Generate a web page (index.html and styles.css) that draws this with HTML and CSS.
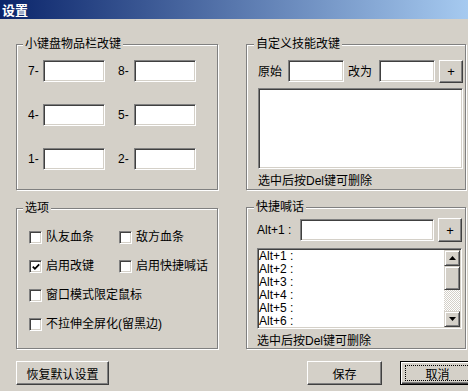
FILE: index.html
```html
<!DOCTYPE html>
<html lang="zh-CN">
<head>
<meta charset="utf-8">
<title>设置</title>
<link rel="stylesheet" href="styles.css">
</head>
<body>
<div class="window">
  <div class="titlebar"><span class="title">设置</span></div>
  <div class="client">
    <div class="columns">
      <div class="col col-left">
        <div class="group g-keypad">
          <span class="legend">小键盘物品栏改键</span>
          <div class="keypad">
            <span class="klabel">7-</span><span class="edit"></span>
            <span class="klabel k2">8-</span><span class="edit"></span>
            <span class="klabel">4-</span><span class="edit"></span>
            <span class="klabel k2">5-</span><span class="edit"></span>
            <span class="klabel">1-</span><span class="edit"></span>
            <span class="klabel k2">2-</span><span class="edit"></span>
          </div>
        </div>
        <div class="group g-options">
          <span class="legend">选项</span>
          <div class="options">
            <div class="check"><span class="box"></span><span>队友血条</span></div>
            <div class="check"><span class="box"></span><span>敌方血条</span></div>
            <div class="check"><span class="box"><svg class="tick" width="8" height="8" viewBox="0 0 8 8"><polyline points="0.8,3.6 2.9,5.8 7.2,1.4" fill="none" stroke="#000" stroke-width="1.8"/></svg></span><span>启用改键</span></div>
            <div class="check"><span class="box"></span><span>启用快捷喊话</span></div>
            <div class="check wide"><span class="box"></span><span>窗口模式限定鼠标</span></div>
            <div class="check wide"><span class="box"></span><span>不拉伸全屏化(留黑边)</span></div>
          </div>
        </div>
      </div>
      <div class="col col-right">
        <div class="group g-custom">
          <span class="legend">自定义技能改键</span>
          <div class="inner">
            <div class="row">
              <span class="lbl-orig">原始</span>
              <span class="edit edit-small"></span>
              <span class="lbl-to">改为</span>
              <span class="edit edit-small"></span>
              <span class="btn btn-plus">+</span>
            </div>
            <div class="listbox list-custom"></div>
            <div class="note">选中后按Del键可删除</div>
          </div>
        </div>
        <div class="group g-chat">
          <span class="legend">快捷喊话</span>
          <div class="inner">
            <div class="row">
              <span class="lbl-alt">Alt+1 :</span>
              <span class="edit edit-wide"></span>
              <span class="btn btn-plus btn-plus2">+</span>
            </div>
            <div class="listbox list-chat">
              <div class="items">
                <div class="item">Alt+1 :</div>
                <div class="item">Alt+2 :</div>
                <div class="item">Alt+3 :</div>
                <div class="item">Alt+4 :</div>
                <div class="item">Alt+5 :</div>
                <div class="item">Alt+6 :</div>
              </div>
              <div class="sb">
                <span class="sb-btn"><svg width="7" height="4" viewBox="0 0 7 4"><polygon points="3.5,0 7,4 0,4" fill="#000"/></svg></span>
                <span class="sb-thumb"></span>
                <span class="sb-track"></span>
                <span class="sb-btn"><svg width="7" height="4" viewBox="0 0 7 4"><polygon points="0,0 7,0 3.5,4" fill="#000"/></svg></span>
              </div>
            </div>
            <div class="note">选中后按Del键可删除</div>
          </div>
        </div>
      </div>
    </div>
    <div class="buttons">
      <span class="btn btn-reset">恢复默认设置</span>
      <span class="btn btn-save">保存</span>
      <span class="btn btn-cancel">取消</span>
    </div>
  </div>
</div>
</body>
</html>
```

FILE: styles.css
```css
* { box-sizing: border-box; }
html, body { margin: 0; padding: 0; }
body {
  width: 468px;
  height: 391px;
  overflow: hidden;
  background: #d4d0c8;
  font-family: "Liberation Sans", "Noto Sans CJK SC", sans-serif;
  font-size: 12px;
  color: #000;
}
.window { width: 468px; height: 391px; overflow: hidden; }
.titlebar {
  height: 19px;
  background: linear-gradient(to right, #0a246a 0%, #a6caf0 100%);
  display: flex;
  align-items: center;
  padding-left: 2px;
}
.title {
  color: #fff;
  font-weight: bold;
  font-size: 13px;
  line-height: 19px;
  font-family: "Noto Sans CJK SC", sans-serif;
}
.client { padding: 25px 0 0 16px; }
.columns { display: flex; gap: 28px; align-items: flex-start; }
.col { display: flex; flex-direction: column; }
.col-left { width: 202px; gap: 18px; }
.col-right { width: 220px; gap: 17px; }

.group {
  position: relative;
  border: 1px solid #808080;
  box-shadow: 1px 1px 0 #fff, inset 1px 1px 0 #fff;
}
.legend {
  position: absolute;
  top: -8px;
  left: 6px;
  padding: 0 2px;
  background: #d4d0c8;
  line-height: 14px;
  white-space: nowrap;
}
.col-right .legend { left: 7px; }
.g-keypad { height: 146px; }
.g-options { height: 141px; }
.g-custom { height: 146px; }
.g-chat { height: 142px; }

.edit {
  display: block;
  height: 22px;
  background: #fff;
  border: 1px solid;
  border-color: #808080 #fff #fff #808080;
  box-shadow: inset 1px 1px 0 #404040, inset -1px -1px 0 #d4d0c8;
}

.keypad {
  display: grid;
  grid-template-columns: 15px 62px 29px 62px;
  grid-auto-rows: 22px;
  row-gap: 22px;
  align-items: center;
  padding: 15px 0 0 11px;
}
.k2 { padding-left: 13px; }

.options {
  display: grid;
  grid-template-columns: 90px auto;
  grid-auto-rows: 13px;
  row-gap: 16px;
  padding: 22px 0 0 12px;
}
.check { display: flex; align-items: center; gap: 4px; white-space: nowrap; line-height: 13px; }
.wide { grid-column: span 2; }
.box {
  width: 13px;
  height: 13px;
  flex: none;
  background: #fff;
  border: 1px solid;
  border-color: #808080 #fff #fff #808080;
  box-shadow: inset 1px 1px 0 #404040, inset -1px -1px 0 #d4d0c8;
  display: flex;
  align-items: center;
  justify-content: center;
}
.tick { display: block; }

.g-custom .inner { padding: 14px 2px 0 11px; }
.g-chat .inner { padding: 10px 3px 0 10px; }
.row { display: flex; align-items: center; height: 23px; }
.lbl-orig { width: 30px; white-space: nowrap; }
.edit-small { width: 56px; }
.lbl-to { width: 31px; margin-left: 4px; white-space: nowrap; }
.lbl-alt { width: 43px; white-space: nowrap; }
.edit-wide { width: 134px; }

.btn {
  display: flex;
  align-items: center;
  justify-content: center;
  height: 24px;
  background: #d4d0c8;
  border: 1px solid;
  border-color: #fff #404040 #404040 #fff;
  box-shadow: inset -1px -1px 0 #808080;
  white-space: nowrap;
}
.btn-plus { width: 24px; height: 23px; margin-left: 4px; margin-top: 1px; font-size: 13px; }
.btn-plus2 { height: 24px; margin-top: 1px; }

.listbox {
  background: #fff;
  border: 1px solid;
  border-color: #808080 #fff #fff #808080;
  box-shadow: inset 1px 1px 0 #404040, inset -1px -1px 0 #d4d0c8;
  height: 81px;
  width: 205px;
}
.list-custom { margin-top: 6px; }
.list-chat { margin-top: 7px; width: 205px; display: flex; padding: 1px 1px 1px 1px; }
.note { margin-top: 5px; line-height: 14px; white-space: nowrap; }

.items { flex: 1; padding-left: 0; }
.item { line-height: 13px; height: 13px; white-space: nowrap; }
.sb { width: 16px; display: flex; flex-direction: column; }
.sb-btn, .sb-thumb {
  display: flex;
  align-items: center;
  justify-content: center;
  background: #d4d0c8;
  border: 1px solid;
  border-color: #d4d0c8 #404040 #404040 #d4d0c8;
  box-shadow: inset 1px 1px 0 #fff, inset -1px -1px 0 #808080;
}
.sb-btn { height: 16px; flex: none; }
.sb-thumb { height: 24px; flex: none; }
.sb-track {
  flex: 1;
  background: repeating-conic-gradient(#fff 0 25%, #d4d0c8 0 50%) 0 0 / 2px 2px;
}

.buttons { display: flex; width: 459px; margin-top: 12px; }
.btn-reset { width: 93px; }
.btn-save { width: 75px; margin-left: auto; }
.btn-cancel {
  position: relative;
  width: 75px;
  margin-left: 18px;
  border: 1px solid #000;
  box-shadow: inset 1px 1px 0 #fff, inset -1px -1px 0 #404040, inset -2px -2px 0 #808080;
}
.btn-cancel::after {
  content: "";
  position: absolute;
  top: 3px;
  left: 4px;
  right: 4px;
  bottom: 3px;
  border: 1px dotted #000;
}
```
